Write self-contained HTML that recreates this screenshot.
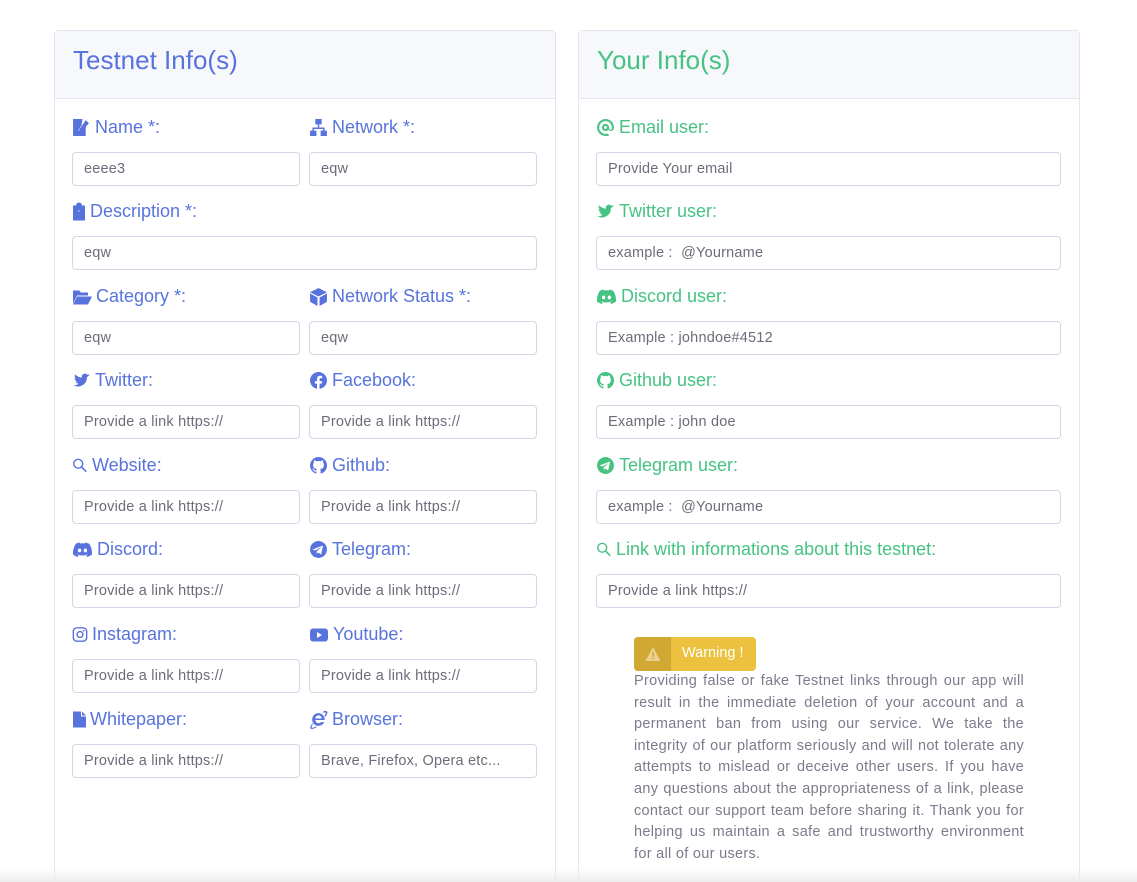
<!DOCTYPE html>
<html><head><meta charset="utf-8"><style>
*{box-sizing:border-box;margin:0;padding:0}
html,body{width:1137px;height:882px;overflow:hidden}
body{background:#fff;font-family:"Liberation Sans",sans-serif;position:relative}
.card{position:absolute;top:30px;width:502px;height:870px;border:1px solid #e3e6ef;border-radius:4px;background:#fff}
.hd{height:68px;background:#f7f8fc;border-bottom:1px solid #e3e6ef;padding:14px 0 0 18px;font-size:26px}
.l{position:absolute;font-size:18px;display:flex;align-items:center;gap:4px;height:22px}
.l svg{width:19px;height:19px;flex:none}
.b{color:#5873dc}.g{color:#46c283}
.b svg{fill:#5873dc}.g svg{fill:#46c283}
.i{position:absolute;height:34px;border:1px solid #d4d5e6;border-radius:4px;font-size:14.5px;color:#6c6c7a;padding:8px 11px;white-space:nowrap;overflow:hidden;letter-spacing:.2px}
.warn{position:absolute;left:634px;top:637px;width:122px;height:34px;border-radius:4px;background:#ecc13d;overflow:hidden}
.warn .ic{position:absolute;left:0;top:0;width:37px;height:34px;background:#d2a834}
.warn span{position:absolute;left:48px;top:8px;color:#fff;font-size:14.5px}
.txt{position:absolute;left:634px;top:671px;width:390px;font-size:14.5px;line-height:21.6px;color:#7b7b8c;text-align:justify;letter-spacing:.3px}
.shade{position:absolute;left:0;right:0;top:868px;height:14px;background:linear-gradient(#fff0,#eee)}
</style></head><body>
<div class="card" style="left:54px"><div class="hd b">Testnet Info(s)</div></div>
<div class="card" style="left:578px"><div class="hd g">Your Info(s)</div></div>

<div class="l b" style="left:72px;top:116px"><svg viewBox="0 0 18 18"><path d="M1 1h9l-1 6-3 5 2 1 5-7v11H1z"/><path d="M13 2l3 3-7 8-3 1 1-3z"/></svg>Name *:</div>
<div class="l b" style="left:309px;top:116px"><svg viewBox="0 0 18 18"><path d="M6 1h6v5H6zM1 12h6v5H1zM11 12h6v5h-6zM8.3 6h1.4v3h5v3h-1.4v-1.6H4.7V12H3.3V9h5z"/></svg>Network *:</div>
<div class="l b" style="left:72px;top:200px"><svg viewBox="0 0 14 18" style="width:14px"><path d="M1 3h3a3 3 0 016 0h3v15H1zM6 8a1 1 0 102 0c0-1 2-1 2 1s-2 1.5-2 3H6c0-2 2-2 2-3s-2-1-2-1zM6 13h2v2H6z"/></svg>Description *:</div>
<div class="l b" style="left:72px;top:285px"><svg viewBox="0 0 20 18" style="width:20px"><path d="M1 3h6l2 2h7v3H5l-4 8zM5 9h15l-4 8H1z"/></svg>Category *:</div>
<div class="l b" style="left:309px;top:285px"><svg viewBox="0 0 18 18"><path d="M9 1l8 4-8 4-8-4zM1 6l7 4v8l-7-4zM10 10l7-4v8l-7 4z"/></svg>Network Status *:</div>
<div class="l b" style="left:72px;top:369px"><svg viewBox="0 0 18 18"><path d="M17 4c-.6.3-1.2.4-1.8.5.7-.4 1.1-1 1.4-1.7-.6.4-1.3.6-2 .8a3 3 0 00-5.2 2.7C6.800 6.2 4.600 5 3 3.100c-.9 1.500-.4 3.200.9 4.100-.5 0-1-.2-1.400-.4 0 1.500 1 2.800 2.400 3.100-.4.100-.9.100-1.400 0 .4 1.300 1.600 2.100 2.900 2.100A6 6 0 011 13.300 8.500 8.500 0 0014.100 5.800z"/></svg>Twitter:</div>
<div class="l b" style="left:309px;top:369px"><svg viewBox="0 0 18 18"><circle cx="9" cy="9" r="8"/><path d="M10 18v-6h2l.4-2.400H10V8c0-.7.3-1.200 1.300-1.200h1.200V4.700S11.500 4.500 10.600 4.500C8.700 4.500 7.600 5.600 7.600 7.600v2H5.600V12h2v6z" fill="#fff"/></svg>Facebook:</div>
<div class="l b" style="left:72px;top:454px"><svg viewBox="0 0 18 18" style="width:16px"><circle cx="7" cy="7" r="5" fill="none" stroke="#5873dc" stroke-width="1.6"/><path d="M10.500 10.500l5.500 5.500" stroke="#5873dc" stroke-width="1.8"/></svg>Website:</div>
<div class="l b" style="left:309px;top:454px"><svg viewBox="0 0 18 18"><path d="M9 1a8 8 0 00-2.500 15.600c.4 0 .5-.2.5-.4v-1.500c-2.200.5-2.700-1-2.700-1-.4-.9-.9-1.200-.9-1.200-.7-.5.1-.5.1-.5.8.1 1.200.8 1.200.8.7 1.200 1.900.9 2.300.7.1-.5.3-.9.5-1.100-1.800-.2-3.600-.9-3.600-4 0-.9.3-1.600.8-2.100-.1-.2-.4-1 .1-2.100 0 0 .7-.2 2.200.8a7.600 7.600 0 014 0c1.500-1 2.200-.8 2.200-.8.4 1.100.2 1.900.1 2.100.5.5.8 1.200.8 2.100 0 3.100-1.900 3.800-3.600 4 .3.300.5.800.5 1.500v2.300c0 .2.100.5.600.4A8 8 0 009 1z"/></svg>Github:</div>
<div class="l b" style="left:72px;top:538px"><svg viewBox="0 0 22 18" style="width:21px"><path d="M18 3a17 17 0 00-4-1.300l-.5 1a15 15 0 00-5 0L8 1.700A17 17 0 004 3C1.500 7 .8 10.700 1.100 14.400a17 17 0 005 2.500l1-1.700-1.700-.8.4-.3a12 12 0 0010.400 0l.4.3-1.700.8 1 1.700a17 17 0 005-2.500C21.300 10.200 20.300 6.600 18 3zM8 12c-1 0-1.800-.9-1.800-2S7 8 8 8s1.800.9 1.800 2S9 12 8 12zm6 0c-1 0-1.800-.9-1.800-2s.8-2 1.800-2 1.800.9 1.800 2-.8 2-1.800 2z"/></svg> Discord:</div>
<div class="l b" style="left:309px;top:538px"><svg viewBox="0 0 18 18"><circle cx="9" cy="9" r="8"/><path d="M4 8.800l8.500-3.300c.4-.1.700.1.600.7l-1.400 6.800c-.1.500-.4.600-.8.400l-2.200-1.600-1 1c-.1.100-.2.200-.5.200l.2-2.300 4.100-3.700c.2-.2 0-.3-.3-.1L6.200 10 4 9.300c-.5-.1-.5-.4 0-.5z" fill="#fff"/></svg>Telegram:</div>
<div class="l b" style="left:72px;top:623px"><svg viewBox="0 0 18 18" style="width:16px"><rect x="1.500" y="1.500" width="15" height="15" rx="4" fill="none" stroke="#5873dc" stroke-width="1.600"/><circle cx="9" cy="9" r="3.300" fill="none" stroke="#5873dc" stroke-width="1.600"/><circle cx="13.200" cy="4.800" r="1"/></svg>Instagram:</div>
<div class="l b" style="left:309px;top:623px"><svg viewBox="0 0 20 18" style="width:20px"><rect x="1" y="3" width="18" height="13" rx="3"/><path d="M8 6.500v6l5-3z" fill="#fff"/></svg>Youtube:</div>
<div class="l b" style="left:72px;top:708px"><svg viewBox="0 0 14 18" style="width:14px"><path d="M1 1h8v5h5v11H1zM10 1l4 4h-4z"/></svg>Whitepaper:</div>
<div class="l b" style="left:309px;top:708px"><svg viewBox="0 0 18 18"><path d="M9 3a6 6 0 00-6 6c0 3.300 2.700 6 6 6 2.500 0 4.500-1.400 5.500-3.500h-3c-.6.600-1.500 1-2.500 1a3 3 0 01-3-3h8.800A6 6 0 009 3zM6 8a3 3 0 016 0zM14 1c2-.5 3.500 0 3.500 1.500 0 1-1 2.500-2 4l-1-1c1-1.300 1.500-2.300 1.300-2.800-.3-.6-1.500-.5-3 .2-1-.1 0 0 0 0zM4 13c-1.600 2-2 3.500-1 3.800.6.200 2-.3 3.500-1.300l1 .5c-2.500 1.800-5 2.500-6 1.500-.8-.8 0-2.800 1.800-5z"/></svg>Browser:</div>

<div class="i" style="left:72px;top:152px;width:228px">eeee3</div>
<div class="i" style="left:309px;top:152px;width:228px">eqw</div>
<div class="i" style="left:72px;top:236px;width:465px">eqw</div>
<div class="i" style="left:72px;top:321px;width:228px">eqw</div>
<div class="i" style="left:309px;top:321px;width:228px">eqw</div>
<div class="i" style="left:72px;top:405px;width:228px">Provide a link https://</div>
<div class="i" style="left:309px;top:405px;width:228px">Provide a link https://</div>
<div class="i" style="left:72px;top:490px;width:228px">Provide a link https://</div>
<div class="i" style="left:309px;top:490px;width:228px">Provide a link https://</div>
<div class="i" style="left:72px;top:574px;width:228px">Provide a link https://</div>
<div class="i" style="left:309px;top:574px;width:228px">Provide a link https://</div>
<div class="i" style="left:72px;top:659px;width:228px">Provide a link https://</div>
<div class="i" style="left:309px;top:659px;width:228px">Provide a link https://</div>
<div class="i" style="left:72px;top:744px;width:228px">Provide a link https://</div>
<div class="i" style="left:309px;top:744px;width:228px">Brave, Firefox, Opera etc...</div>

<div class="l g" style="left:596px;top:116px"><svg viewBox="0 0 18 18"><path d="M9 1a8 8 0 100 16h3v-2H9a6 6 0 116-6v1c0 .8-.6 1.300-1.300 1.300S12.400 10.800 12.400 10V9A3.400 3.400 0 109 12.400c1 0 1.900-.4 2.500-1.100a3.200 3.200 0 005.500-2.300V9a8 8 0 00-8-8zm0 9.400A1.400 1.400 0 119 7.600a1.400 1.400 0 010 2.800z"/></svg>Email user:</div>
<div class="l g" style="left:596px;top:200px"><svg viewBox="0 0 18 18"><path d="M17 4c-.6.3-1.2.4-1.8.5.7-.4 1.1-1 1.4-1.7-.6.4-1.3.6-2 .8a3 3 0 00-5.2 2.7C6.800 6.200 4.600 5 3 3.100c-.9 1.500-.4 3.200.9 4.100-.5 0-1-.2-1.400-.4 0 1.500 1 2.800 2.400 3.100-.4.100-.9.100-1.400 0 .4 1.300 1.600 2.100 2.900 2.100A6 6 0 011 13.300 8.500 8.500 0 0014.100 5.800z"/></svg>Twitter user:</div>
<div class="l g" style="left:596px;top:285px"><svg viewBox="0 0 22 18" style="width:21px"><path d="M18 3a17 17 0 00-4-1.300l-.5 1a15 15 0 00-5 0L8 1.700A17 17 0 004 3C1.500 7 .8 10.700 1.100 14.400a17 17 0 005 2.500l1-1.700-1.700-.8.4-.3a12 12 0 0010.400 0l.4.3-1.700.8 1 1.700a17 17 0 005-2.500C21.300 10.200 20.300 6.600 18 3zM8 12c-1 0-1.800-.9-1.800-2S7 8 8 8s1.800.9 1.800 2S9 12 8 12zm6 0c-1 0-1.800-.9-1.800-2s.8-2 1.800-2 1.800.9 1.800 2-.8 2-1.800 2z"/></svg> Discord user:</div>
<div class="l g" style="left:596px;top:369px"><svg viewBox="0 0 18 18"><path d="M9 1a8 8 0 00-2.500 15.600c.4 0 .5-.2.5-.4v-1.500c-2.200.5-2.700-1-2.700-1-.4-.9-.9-1.200-.9-1.200-.7-.5.1-.5.1-.5.8.1 1.200.8 1.200.8.7 1.200 1.900.9 2.300.7.1-.5.3-.9.5-1.100-1.800-.2-3.600-.9-3.600-4 0-.9.3-1.600.8-2.100-.1-.2-.4-1 .1-2.100 0 0 .7-.2 2.200.8a7.600 7.600 0 014 0c1.500-1 2.200-.8 2.200-.8.4 1.100.2 1.900.1 2.100.5.5.8 1.200.8 2.100 0 3.100-1.900 3.800-3.600 4 .3.300.5.800.5 1.500v2.300c0 .2.100.5.600.4A8 8 0 009 1z"/></svg>Github user:</div>
<div class="l g" style="left:596px;top:454px"><svg viewBox="0 0 18 18"><circle cx="9" cy="9" r="8"/><path d="M4 8.800l8.500-3.300c.4-.1.700.1.600.7l-1.400 6.800c-.1.500-.4.600-.8.400l-2.200-1.600-1 1c-.1.100-.2.200-.5.200l.2-2.300 4.100-3.700c.2-.2 0-.3-.3-.1L6.200 10 4 9.300c-.5-.1-.5-.4 0-.5z" fill="#fff"/></svg>Telegram user:</div>
<div class="l g" style="left:596px;top:538px"><svg viewBox="0 0 18 18" style="width:16px"><circle cx="7" cy="7" r="5" fill="none" stroke="#46c283" stroke-width="1.600"/><path d="M10.500 10.500l5.500 5.500" stroke="#46c283" stroke-width="1.800"/></svg>Link with informations about this testnet:</div>

<div class="i" style="left:596px;top:152px;width:465px">Provide Your email</div>
<div class="i" style="left:596px;top:236px;width:465px">example :&nbsp; @Yourname</div>
<div class="i" style="left:596px;top:321px;width:465px">Example : johndoe#4512</div>
<div class="i" style="left:596px;top:405px;width:465px">Example : john doe</div>
<div class="i" style="left:596px;top:490px;width:465px">example :&nbsp; @Yourname</div>
<div class="i" style="left:596px;top:574px;width:465px">Provide a link https://</div>

<div class="warn"><div class="ic"><svg viewBox="0 0 16 16" width="16" height="16" style="position:absolute;left:11px;top:9px"><path d="M8 1l7.500 14H.5z" fill="#ead28e"/><path d="M7.200 6h1.600v4.500H7.200zM7.200 11.500h1.600v1.600H7.200z" fill="#d2a834"/></svg></div><span>Warning !</span></div>
<div class="txt">Providing false or fake Testnet links through our app will result in the immediate deletion of your account and a permanent ban from using our service. We take the integrity of our platform seriously and will not tolerate any attempts to mislead or deceive other users. If you have any questions about the appropriateness of a link, please contact our support team before sharing it. Thank you for helping us maintain a safe and trustworthy environment for all of our users.</div>
<div class="shade"></div>
</body></html>
